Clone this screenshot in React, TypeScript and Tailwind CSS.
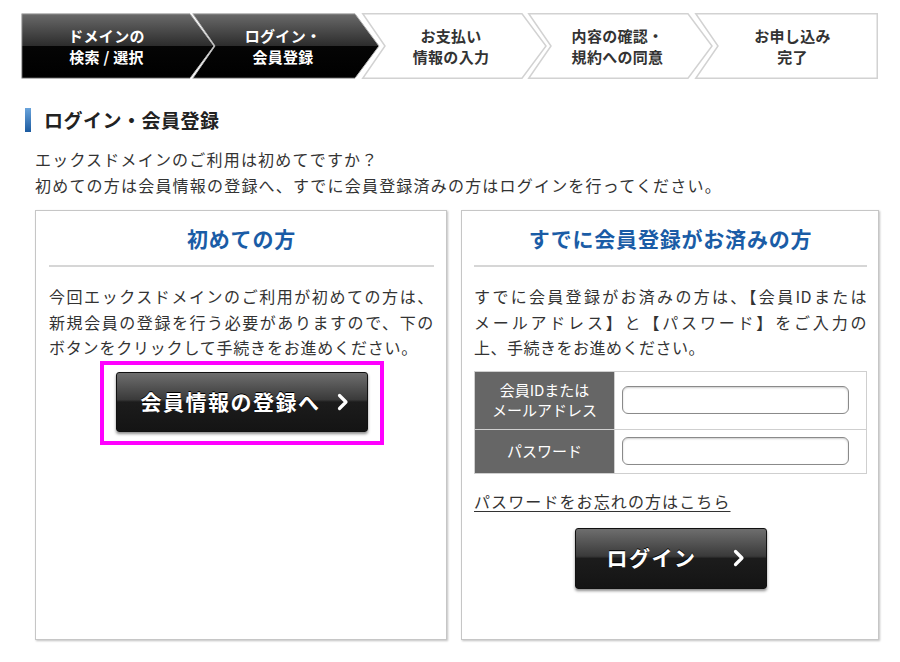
import React from 'react';

type Step = {
  lines: [string, string];
  w: string;
  pitch: number;
  body: number;
  dark: boolean;
};

const steps: Step[] = [
  { lines: ['ドメインの', '検索 / 選択'], w: 'w-[171px]', pitch: 171, body: 169, dark: true },
  { lines: ['ログイン・', '会員登録'], w: 'w-[170px]', pitch: 170, body: 163, dark: true },
  { lines: ['お支払い', '情報の入力'], w: 'w-[166px]', pitch: 166, body: 160, dark: false },
  { lines: ['内容の確認・', '規約への同意'], w: 'w-[167px]', pitch: 167, body: 160, dark: false },
  { lines: ['お申し込み', '完了'], w: 'w-[183px]', pitch: 183, body: 183, dark: false },
];

const H = 66;
const TIP = 24;

function StepShape({ step, index }: { step: Step; index: number }) {
  const last = index === steps.length - 1;
  const t = 0.75;
  const b = last ? step.body - t : step.body;
  const pts = [`${t},${t}`, `${b},${t}`];
  if (!last) pts.push(`${b + TIP},${H / 2}`);
  pts.push(`${b},${H - t}`, `${t},${H - t}`);
  if (index > 0) pts.push(`${TIP - 1},${H / 2}`);
  const gid = `stepgrad${index}`;
  return (
    <svg
      className="absolute left-0 top-0 overflow-visible"
      width={step.body + TIP}
      height={H}
      viewBox={`0 0 ${step.body + TIP} ${H}`}
    >
      <defs>
        <linearGradient id={gid} x1="0" y1="0" x2="0" y2="1">
          <stop offset="0" stopColor="#6a6a6a" />
          <stop offset="0.5" stopColor="#2c2c2c" />
          <stop offset="0.5" stopColor="#050505" />
          <stop offset="1" stopColor="#000000" />
        </linearGradient>
      </defs>
      <polygon
        points={pts.join(' ')}
        fill={step.dark ? `url(#${gid})` : '#ffffff'}
        stroke={step.dark ? '#b5b5b5' : '#d2d2d2'}
        strokeWidth={step.dark ? 1 : 1.5}
      />
    </svg>
  );
}

function Stepper() {
  return (
    <div className="ml-[21px] mt-[13px] flex h-[66px]">
      {steps.map((s, i) => (
        <div key={i} className={`relative h-full shrink-0 ${s.w}`}>
          <StepShape step={s} index={i} />
          <div
            className={`relative flex h-full flex-col items-center justify-center text-center text-[15px] font-bold leading-[21px] tracking-[0.3px] ${
              i > 0 ? 'pl-[12px]' : ''
            } ${s.dark ? 'text-white' : 'text-[#333]'}`}
          >
            <span>{s.lines[0]}</span>
            <span>{s.lines[1]}</span>
          </div>
        </div>
      ))}
    </div>
  );
}

function Chevron() {
  return (
    <svg width="12" height="18" viewBox="0 0 12 18" className="shrink-0">
      <polyline points="2.5,2.5 9,9 2.5,15.5" fill="none" stroke="#fff" strokeWidth="3.2" strokeLinecap="round" strokeLinejoin="round" />
    </svg>
  );
}

const btn =
  'flex items-center justify-center rounded-[3px] border border-[#111] bg-[linear-gradient(to_bottom,#6e6e6e_0%,#3a3a3a_46%,#1c1c1c_50%,#141414_100%)] text-[21px] font-bold tracking-[1.5px] text-white shadow-[0_2px_3px_rgba(0,0,0,0.45)] [text-shadow:0_-1px_0_#000]';

const line = 'block whitespace-nowrap [text-align-last:justify]';

export default function App() {
  return (
    <div className="relative h-[662px] w-[900px] overflow-hidden bg-white font-['Noto_Sans_CJK_JP','Noto_Sans',sans-serif] text-[#333]">
      <Stepper />

      <div className="ml-[25px] mt-[29px] flex h-[24px] items-center">
        <div className="h-[24px] w-[6px] bg-[linear-gradient(to_bottom,#6aa4dc,#1b5aa0)]" />
        <h2 className="ml-[13px] text-[19px] font-bold leading-[24px] tracking-[0.5px] text-[#222]">ログイン・会員登録</h2>
      </div>

      <p className="ml-[35px] mt-[14px] text-[16px] leading-[26px] tracking-[1.2px]">
        エックスドメインのご利用は初めてですか？
        <br />
        初めての方は会員情報の登録へ、すでに会員登録済みの方はログインを行ってください。
      </p>

      <div className="ml-[35px] mt-[12px] flex gap-[14px]">
        {/* new members */}
        <section className="h-[430px] w-[412px] border border-[#c6c6c6] pl-[13px] pr-[12px] shadow-[1px_1px_2px_rgba(0,0,0,0.25)]">
          <h3 className="pt-[13px] text-center text-[21px] font-bold leading-[28px] tracking-[0.8px] text-[#1a5ca6]">初めての方</h3>
          <div className="mt-[13px] h-[2px] bg-[#d6d6d6]" />
          <div className="mt-[17px] text-[16px] leading-[25.5px] tracking-[0.8px]">
            <span className={line}>今回エックスドメインのご利用が初めての方は、</span>
            <span className={line}>新規会員の登録を行う必要がありますので、下の</span>
            <span className="block whitespace-nowrap">ボタンをクリックして手続きをお進めください。</span>
          </div>
          <div className="flex justify-center">
            <div className="border-[4px] border-[#ff00ff] px-[12px] pb-[9px] pt-[7px]">
              <button className={`${btn} h-[60px] w-[252px] gap-[16px] pl-[6px]`}>
                <span>会員情報の登録へ</span>
                <Chevron />
              </button>
            </div>
          </div>
        </section>

        {/* existing members */}
        <section className="h-[430px] w-[418px] border border-[#c6c6c6] pl-[12px] pr-[11px] shadow-[1px_1px_2px_rgba(0,0,0,0.25)]">
          <h3 className="pt-[13px] text-center text-[21px] font-bold leading-[28px] tracking-[0.8px] text-[#1a5ca6]">すでに会員登録がお済みの方</h3>
          <div className="mt-[13px] h-[2px] bg-[#d6d6d6]" />
          <div className="mt-[17px] text-[16px] leading-[25.5px] tracking-[0.5px]">
            <span className={line}>すでに会員登録がお済みの方は、【会員IDまたは</span>
            <span className={line}>メールアドレス】と【パスワード】をご入力の</span>
            <span className="block whitespace-nowrap">上、手続きをお進めください。</span>
          </div>

          <table className="mt-[10px] w-full border-collapse border border-[#cfcfcf]">
            <tbody>
              <tr className="h-[58px]">
                <th className="w-[140px] border border-[#cfcfcf] bg-[#666] text-[15px] font-normal leading-[20px] text-white">
                  会員IDまたは
                  <br />
                  メールアドレス
                </th>
                <td className="border border-[#cfcfcf] pl-[7px] pr-[17px]">
                  <input className="block h-[28px] w-full rounded-[6px] border border-[#8a8a8a] bg-white shadow-[inset_0_1px_2px_rgba(0,0,0,0.2)] outline-none" />
                </td>
              </tr>
              <tr className="h-[44px]">
                <th className="border border-[#cfcfcf] bg-[#666] text-[15px] font-normal leading-[20px] text-white">パスワード</th>
                <td className="border border-[#cfcfcf] pl-[7px] pr-[17px]">
                  <input type="password" className="block h-[28px] w-full rounded-[6px] border border-[#8a8a8a] bg-white shadow-[inset_0_1px_2px_rgba(0,0,0,0.2)] outline-none" />
                </td>
              </tr>
            </tbody>
          </table>

          <a href="#" className="mt-[14px] block w-fit text-[16px] leading-[26px] tracking-[1.1px] text-[#333] underline underline-offset-[3px]">
            パスワードをお忘れの方はこちら
          </a>

          <div className="mt-[14px] flex justify-center">
            <button className={`${btn} h-[61px] w-[192px] gap-[36px] pl-[10px]`}>
              <span>ログイン</span>
              <Chevron />
            </button>
          </div>
        </section>
      </div>
    </div>
  );
}
